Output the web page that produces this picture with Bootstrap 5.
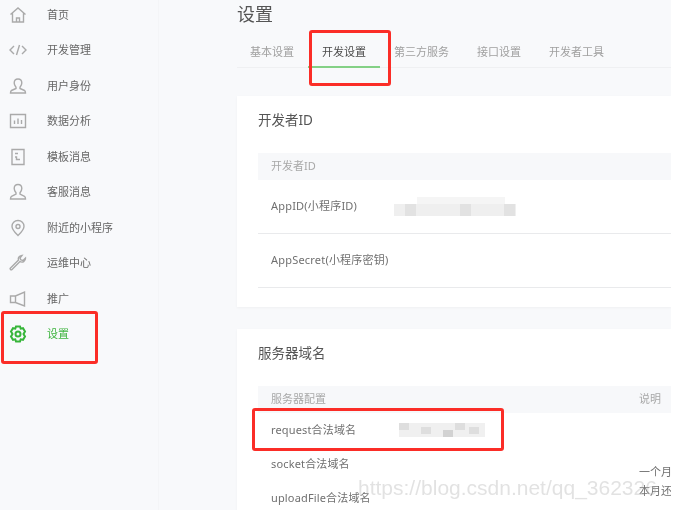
<!doctype html>
<html lang="zh-CN"><head><meta charset="utf-8"><title>设置</title>
<link href="https://cdn.jsdelivr.net/npm/bootstrap@5.3.0/dist/css/bootstrap.min.css" rel="stylesheet">
<style>
html,body{height:510px;overflow:hidden;background:#fff}
body{font-family:"Noto Sans","Noto Sans CJK SC",sans-serif;font-size:11px;color:#666}
.shot{width:671px;height:510px;position:relative;overflow:hidden;background:#f8f9fb;filter:blur(.7px)}
.side{width:159px;flex:none;border-right:1px solid #f4f5f7;background:#f8f9fb}
.side-item{height:35.5px;padding-left:9px;color:#666;font-size:11px}
.side-item svg{width:18px;height:18px;margin-right:20px;flex:none;stroke:#aaa;fill:none;stroke-width:1.4}
.side-item.on{color:#3fb540}
.side-item.on svg{stroke:#36b539;stroke-width:2}
.side-list{margin-top:-3px}
.main{width:512px;flex:none;padding-left:78px}
.ttl{font-size:18px;color:#555;line-height:22px;margin:3px 0 0;font-weight:400}
.tabbar{height:43px;border-bottom:1px solid #eff0f2;margin-bottom:28px;padding-left:13px}
.tab-i{padding:0 14px;height:43px;line-height:54px;color:#a0a0a0;font-size:11px;white-space:nowrap;border-bottom:2px solid transparent}
.tab-i:first-child{padding-left:0;padding-right:14px}
.tab-i.on{color:#4a4a4a;border-bottom-color:#84d186}
.panel{background:#fff;padding:0 0 0 21px;margin-bottom:22px;box-shadow:0 1px 2px #eff0f2}
.panel-1{height:211px}
.panel-t{font-size:13.5px;line-height:48px;height:57px;color:#555;margin:0;font-weight:400}
.thead-b{height:27px;background:#f7f8fa;padding-left:13px;color:#a8a8a8;font-size:11px}
.row-b{height:54px;padding-left:13px;border-bottom:1px solid #e9eaec;color:#707070;letter-spacing:.2px}
.row-c{height:34px;padding-left:13px;color:#707070;white-space:nowrap;overflow:hidden;letter-spacing:.15px}
.lbl{width:123px;flex:none}
.lbl2{width:128px;flex:none}
.note{color:#a8a8a8;margin-left:auto;width:32px;flex:none;white-space:nowrap}
.pix{display:block;filter:blur(.6px)}
.mk{position:absolute;border:3px solid #fb2d27;border-radius:3px}
.mk-a{left:1px;top:311px;width:97px;height:53px}
.mk-b{left:309px;top:30px;width:82px;height:56px}
.mk-c{left:252px;top:408px;width:252px;height:43px}
.wm{position:absolute;left:358px;top:478px;font-family:"Liberation Sans",sans-serif;font-size:21px;line-height:20px;color:rgba(170,170,170,.34);white-space:nowrap}
.side-note{position:absolute;left:639px;white-space:nowrap;color:#707070;line-height:13px}
.n1{top:465px}.n2{top:484px}
</style></head><body>
<div class="shot d-flex">
 <nav class="side">
  <div class="side-list">
  <div class="side-item d-flex align-items-center"><svg viewBox="0 0 18 18"><path d="M1.5 8.5 9 2l7.5 6.5M3.5 7v9h11V7M7.5 16v-4h3v4"/></svg>首页</div>
  <div class="side-item d-flex align-items-center"><svg viewBox="0 0 18 18"><path d="M5 5 1 9l4 4M13 5l4 4-4 4M10.5 4l-3 10"/></svg>开发管理</div>
  <div class="side-item d-flex align-items-center"><svg viewBox="0 0 18 18"><path d="M9 2c-2.500 0-3.800 1.800-3.800 4 0 2 1 3.300 1.800 4.300v1.200L2.500 13.500c-.8.400-1 1-1 2.500h15c0-1.500-.2-2.100-1-2.500L11 11.500v-1.200c.8-1 1.800-2.300 1.800-4.300 0-2.200-1.300-4-3.800-4z"/></svg>用户身份</div>
  <div class="side-item d-flex align-items-center"><svg viewBox="0 0 18 18"><path d="M1.500 2.500h15v13h-15zM5.500 12V8.500M9 12V6.500M12.500 12V8"/></svg>数据分析</div>
  <div class="side-item d-flex align-items-center"><svg viewBox="0 0 18 18"><path d="M3 1.500h12v15H3zM6 5.500h3M6 9h1.500v2.500H11"/></svg>模板消息</div>
  <div class="side-item d-flex align-items-center"><svg viewBox="0 0 18 18"><path d="M9 1.500c-2.500 0-3.800 1.800-3.800 4 0 2 1 3.300 1.800 4.300V11l-4.500 2.300c-.8.400-1 1-1 2.700h15c0-1.700-.2-2.300-1-2.700L11 11V9.800c.8-1 1.800-2.300 1.800-4.300 0-2.200-1.300-4-3.800-4z"/></svg>客服消息</div>
  <div class="side-item d-flex align-items-center"><svg viewBox="0 0 18 18"><path d="M9 1.500c-3.600 0-6 2.600-6 5.800 0 3.700 3.500 6.800 6 9.200 2.500-2.400 6-5.500 6-9.200 0-3.200-2.400-5.800-6-5.800z"/><circle cx="9" cy="7.500" r="2"/></svg>附近的小程序</div>
  <div class="side-item d-flex align-items-center"><svg viewBox="0 0 18 18"><path d="M11 7.500 3 15.500c-1 1-2.500-.5-1.500-1.500L9.500 6c-.6-2 .2-4 3.500-4.500L11 4.200l1 1.800 2 .5 2.500-2.500c.2 3.300-3 5-5.500 3.500z"/></svg>运维中心</div>
  <div class="side-item d-flex align-items-center"><svg viewBox="0 0 18 18"><path d="M1.500 6h5L15.500 2v14l-9-3.500h-5zM6.500 6v6.500"/></svg>推广</div>
  <div class="side-item on d-flex align-items-center"><svg viewBox="0 0 18 18"><path d="M7 1.500h4l.7 2.200 2.300-.5 2 3.300L14.500 9l1.500 2.500-2 3.300-2.300-.5-.7 2.200H7l-.7-2.200-2.300.5-2-3.300L3.500 9 2 6.500l2-3.300 2.300.5z"/><circle cx="9" cy="9" r="2.500"/></svg>设置</div>
  </div>
 </nav>
 <main class="main">
  <h1 class="ttl">设置</h1>
  <div class="tabbar d-flex">
   <div class="tab-i">基本设置</div><div class="tab-i on">开发设置</div><div class="tab-i">第三方服务</div><div class="tab-i">接口设置</div><div class="tab-i">开发者工具</div>
  </div>
  <section class="panel panel-1">
   <h2 class="panel-t">开发者ID</h2>
   <div class="thead-b d-flex align-items-center">开发者ID</div>
   <div class="row-b d-flex align-items-center"><span class="lbl">AppID(小程序ID)</span>
    <svg class="pix" width="122" height="20" viewBox="0 0 122 20"><g fill="#efefef"><rect x="23" y="0" width="88" height="7" fill="#f5f5f5"/><rect x="0" y="7" width="122" height="12"/></g><g fill="#e2e2e2"><rect x="11" y="7" width="11" height="12"/><rect x="66" y="7" width="11" height="12"/><rect x="110" y="7" width="11" height="12"/></g></svg></div>
   <div class="row-b d-flex align-items-center"><span class="lbl">AppSecret(小程序密钥)</span></div>
  </section>
  <section class="panel">
   <h2 class="panel-t">服务器域名</h2>
   <div class="thead-b d-flex align-items-center">服务器配置<span class="note">说明</span></div>
   <div class="row-c d-flex align-items-center"><span class="lbl2">request合法域名</span>
    <svg class="pix" width="86" height="14" viewBox="0 0 86 14"><rect width="86" height="14" fill="#f0f0f0"/><g fill="#dedede"><rect y="0" width="10" height="7"/><rect x="22" y="4" width="10" height="7"/><rect x="44" y="7" width="10" height="7" fill="#d2d2d2"/><rect x="56" y="0" width="10" height="7"/><rect x="70" y="4" width="10" height="7"/></g></svg></div>
   <div class="row-c d-flex align-items-center">socket合法域名</div>
   <div class="row-c d-flex align-items-center">uploadFile合法域名</div>
  </section>
 </main>
 <div class="side-note n1">一个月</div>
 <div class="side-note n2">本月还</div>
 <div class="wm">https://blog.csdn.net/qq_362326</div>
 <div class="mk mk-a"></div><div class="mk mk-b"></div><div class="mk mk-c"></div>
</div>
<script src="https://cdn.jsdelivr.net/npm/bootstrap@5.3.0/dist/js/bootstrap.bundle.min.js"></script>
</body></html>
